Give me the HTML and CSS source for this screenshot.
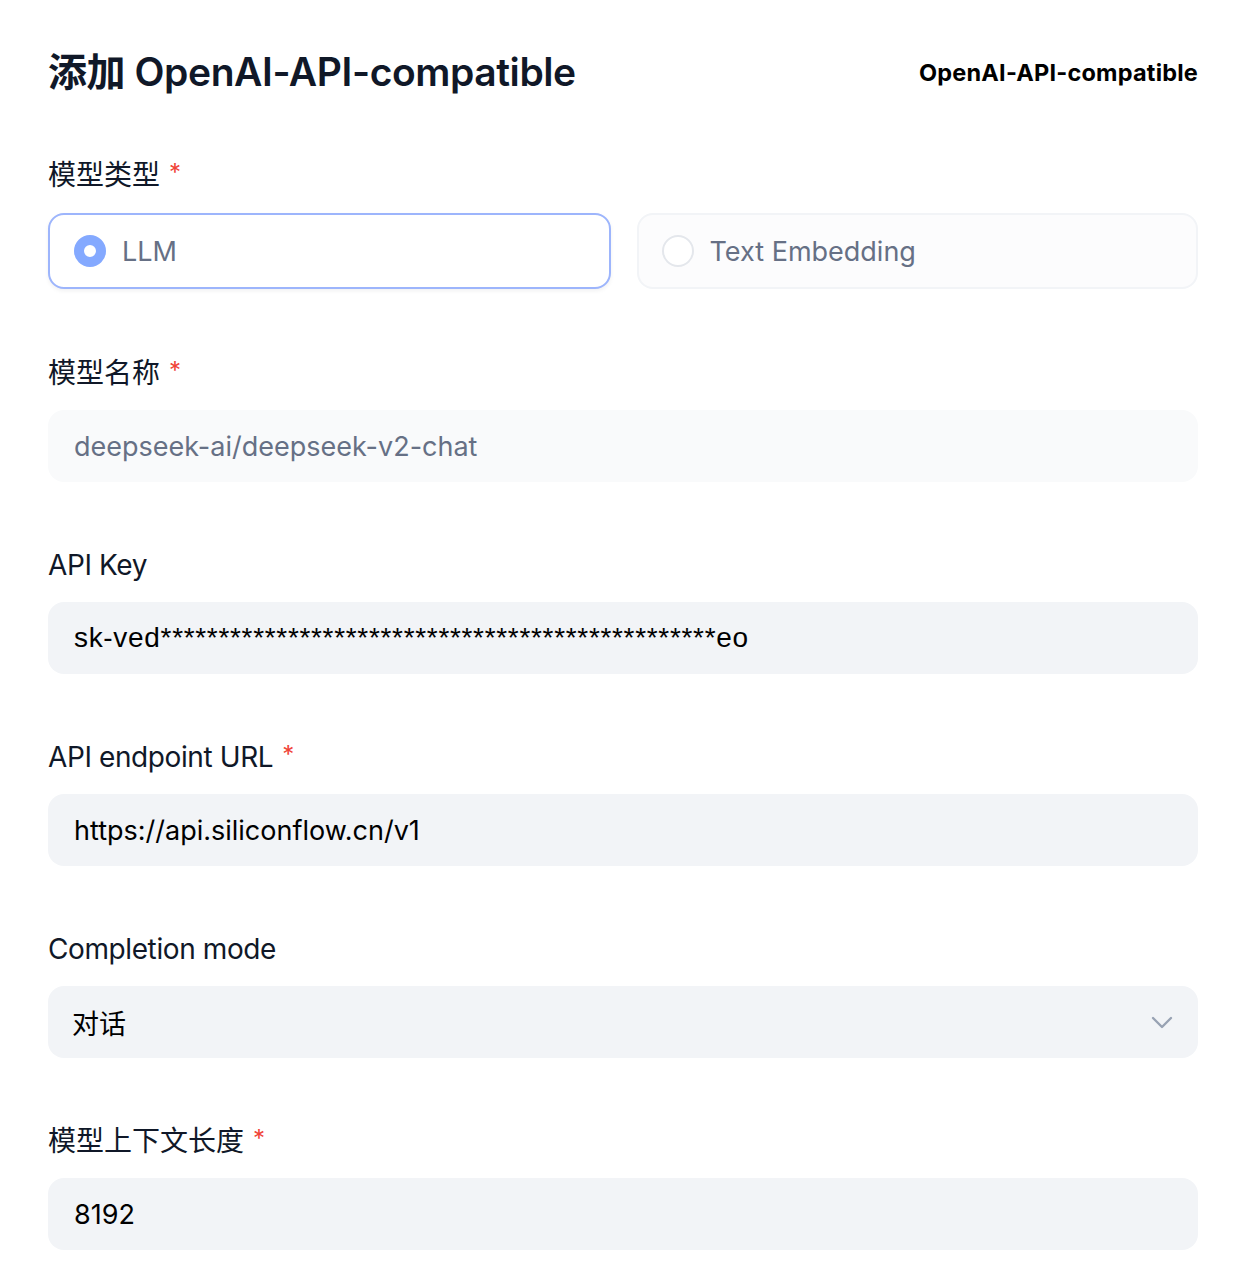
FILE: index.html
```html
<!DOCTYPE html>
<html lang="zh">
<head>
<meta charset="utf-8">
<title>添加 OpenAI-API-compatible</title>
<link rel="stylesheet" href="styles.css">
</head>
<body>
<div class="page">
  <div class="header">
    <h1 class="title">添加 OpenAI-API-compatible</h1>
    <div class="provider">OpenAI-API-compatible</div>
  </div>

  <div class="field first">
    <div class="label">模型类型<span class="req">*</span></div>
    <div class="radios">
      <div class="radio-card selected">
        <span class="dot on"></span>
        <span class="radio-text">LLM</span>
      </div>
      <div class="radio-card">
        <span class="dot"></span>
        <span class="radio-text">Text Embedding</span>
      </div>
    </div>
  </div>

  <div class="field">
    <div class="label">模型名称<span class="req">*</span></div>
    <div class="input light"><span class="placeholder">deepseek-ai/deepseek-v2-chat</span></div>
  </div>

  <div class="field">
    <div class="label latin">API Key</div>
    <div class="input"><span class="value key">sk-ved************************************************eo</span></div>
  </div>

  <div class="field">
    <div class="label latin">API endpoint URL<span class="req">*</span></div>
    <div class="input"><span class="value">https://api.siliconflow.cn/v1</span></div>
  </div>

  <div class="field">
    <div class="label latin">Completion mode</div>
    <div class="input select">
      <span class="value">对话</span>
      <svg class="chevron" width="22" height="14" viewBox="0 0 22 14" fill="none">
        <path d="M2 3l9 9 9-9" stroke="#98a2b3" stroke-width="2.4" stroke-linecap="round" stroke-linejoin="round"/>
      </svg>
    </div>
  </div>

  <div class="field">
    <div class="label">模型上下文长度<span class="req">*</span></div>
    <div class="input"><span class="value">8192</span></div>
  </div>
</div>
</body>
</html>
```

FILE: styles.css
```css
* { box-sizing: border-box; }
html, body { margin: 0; padding: 0; background: #ffffff; }
body {
  font-family: Inter, "Noto Sans CJK SC", "Noto Sans", sans-serif;
  color: #101828;
}
.page {
  width: 1248px;
  padding: 44px 50px 36px 48px;
}
.header {
  display: flex;
  justify-content: space-between;
  align-items: center;
  height: 56px;
}
.title {
  margin: 0;
  font-size: 39px;
  line-height: 56px;
  font-weight: 600;
  color: #101828;
  letter-spacing: -0.42px;
}
.provider {
  font-size: 23.5px;
  font-weight: 700;
  color: #000;
  letter-spacing: 0.2px;
}
.field { margin-top: 63px; }
.field.first { margin-top: 55px; padding-bottom: 1px; }
.label {
  display: flex;
  align-items: center;
  height: 40px;
  font-size: 28px;
  line-height: 40px;
  color: #101828;
  margin-bottom: 17px;
}
.label.latin { letter-spacing: -0.4px; }
.field.first .label { margin-bottom: 18px; }
.req {
  color: #f04438;
  font-size: 24px;
  margin-left: 9px;
  position: relative;
  top: -2px;
  letter-spacing: 0;
}
.radios {
  display: flex;
  gap: 26px;
}
.radio-card {
  flex: 1;
  height: 76px;
  border: 2px solid #f2f4f7;
  background: #fcfcfd;
  border-radius: 16px;
  display: flex;
  align-items: center;
  padding-left: 23px;
  gap: 16px;
}
.radio-card.selected {
  border-color: #9db5fc;
  background: #ffffff;
  padding-left: 24px;
  box-shadow: 0 2px 4px rgba(16, 24, 40, 0.06);
}
.dot {
  width: 32px;
  height: 32px;
  border-radius: 50%;
  border: 2px solid #e4e7ec;
  background: #ffffff;
  flex: none;
}
.dot.on {
  border: 10px solid #84a9ff;
  background: #ffffff;
}
.radio-text {
  font-size: 27px;
  color: #667085;
}
.input {
  height: 72px;
  border-radius: 16px;
  background: #f2f4f7;
  display: flex;
  align-items: center;
  padding: 0 26px;
  font-size: 27px;
}
.input.light { background: #f9fafb; }
.placeholder { color: #667085; }
.value { color: #000; }
.value.key {
  font-family: "Liberation Sans", Arial, sans-serif;
  font-size: 28px;
  letter-spacing: 0.68px;
}
.select {
  justify-content: space-between;
  padding-left: 24px;
  padding-right: 25px;
}
.chevron { display: block; }
```
